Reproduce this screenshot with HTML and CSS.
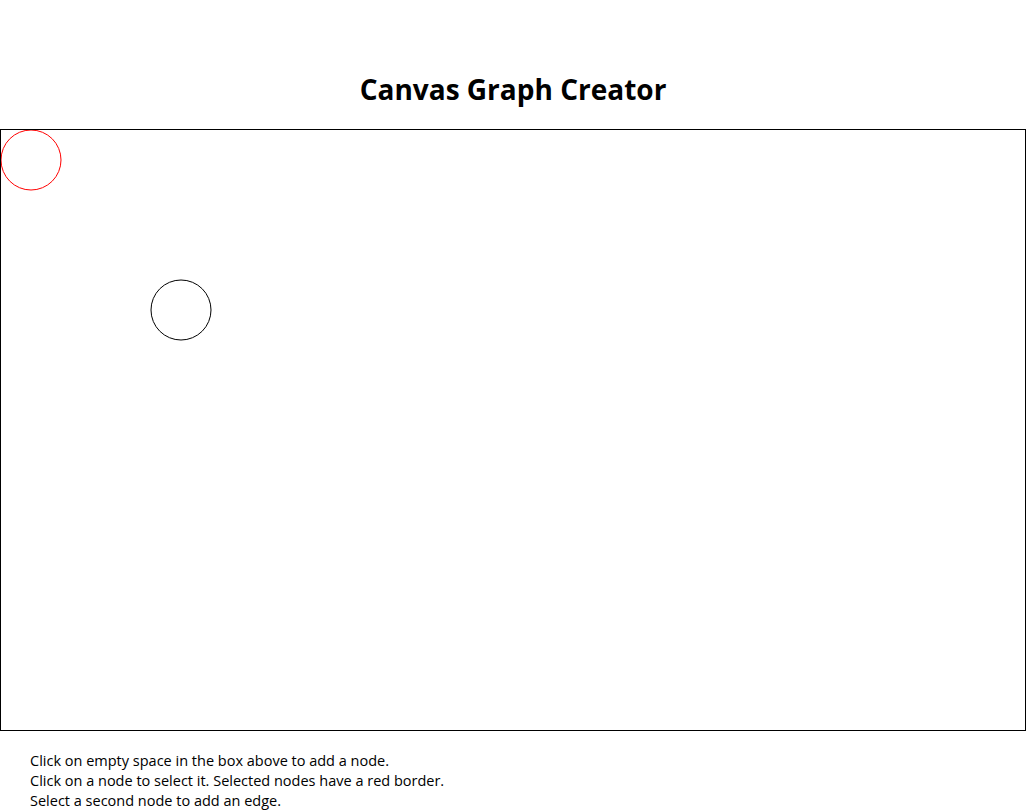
FILE: index.html
```html
<!DOCTYPE html>
<html>
<head>
<meta charset="utf-8">
<link rel="stylesheet" href="styles.css">
</head>
<body>
<h1 class="title">Canvas Graph Creator</h1>
<div class="board">
<svg class="graph" width="1024" height="600" viewBox="0 0 1024 600">
<circle cx="30" cy="30" r="30" fill="none" stroke="#ff0000" stroke-width="1"/>
<circle cx="180" cy="180" r="30" fill="none" stroke="#000000" stroke-width="1"/>
</svg>
</div>
<div class="help">
<div>Click on empty space in the box above to add a node.</div>
<div>Click on a node to select it. Selected nodes have a red border.</div>
<div>Select a second node to add an edge.</div>
</div>
</body>
</html>
```
FILE: styles.css
```css
html, body {
  margin: 0;
  padding: 0;
  background: #fff;
  font-family: "Open Sans", "Noto Sans", sans-serif;
  color: #000;
}
.title {
  margin: 0;
  padding: 70px 0 21px;
  font-size: 28px;
  line-height: 38px;
  font-weight: 700;
  text-align: center;
}
.board {
  width: 1024px;
  height: 600px;
  border: 1px solid #000;
}
.graph {
  display: block;
}
.help {
  padding: 20px 30px 0;
  font-size: 14.5px;
  line-height: 20px;
}
```
